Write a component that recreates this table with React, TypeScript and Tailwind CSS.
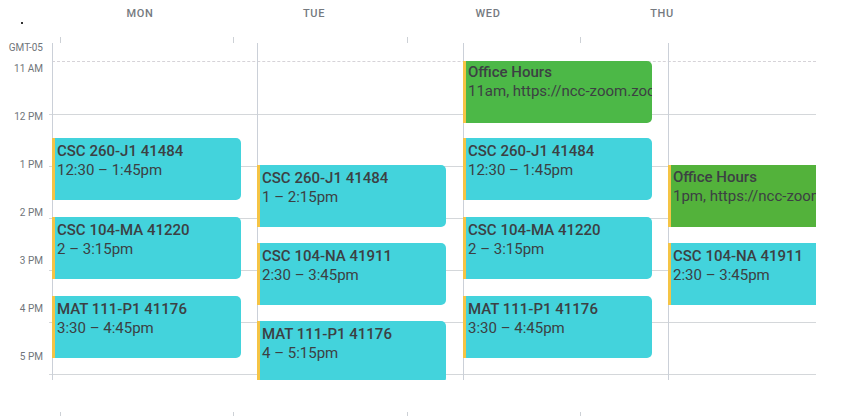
type CalEvent = {
  top: number;
  title: string;
  time: string;
  kind: "class" | "office" | "office2";
};

const days: { name: string; width: string; events: CalEvent[] }[] = [
  {
    name: "MON",
    width: "w-[205px]",
    events: [
      { top: 95, title: "CSC 260-J1 41484", time: "12:30 – 1:45pm", kind: "class" },
      { top: 174, title: "CSC 104-MA 41220", time: "2 – 3:15pm", kind: "class" },
      { top: 253, title: "MAT 111-P1 41176", time: "3:30 – 4:45pm", kind: "class" },
    ],
  },
  {
    name: "TUE",
    width: "w-[206px]",
    events: [
      { top: 122, title: "CSC 260-J1 41484", time: "1 – 2:15pm", kind: "class" },
      { top: 200, title: "CSC 104-NA 41911", time: "2:30 – 3:45pm", kind: "class" },
      { top: 278, title: "MAT 111-P1 41176", time: "4 – 5:15pm", kind: "class" },
    ],
  },
  {
    name: "WED",
    width: "w-[205px]",
    events: [
      { top: 18, title: "Office Hours", time: "11am, https://ncc-zoom.zoom.us", kind: "office" },
      { top: 95, title: "CSC 260-J1 41484", time: "12:30 – 1:45pm", kind: "class" },
      { top: 174, title: "CSC 104-MA 41220", time: "2 – 3:15pm", kind: "class" },
      { top: 253, title: "MAT 111-P1 41176", time: "3:30 – 4:45pm", kind: "class" },
    ],
  },
  {
    name: "THU",
    width: "w-[148px]",
    events: [
      { top: 122, title: "Office Hours", time: "1pm, https://ncc-zoom.zoom.us", kind: "office2" },
      { top: 200, title: "CSC 104-NA 41911", time: "2:30 – 3:45pm", kind: "class" },
    ],
  },
];

const hours = ["11 AM", "12 PM", "1 PM", "2 PM", "3 PM", "4 PM", "5 PM"];

function EventBlock({ ev }: { ev: CalEvent }) {
  const bg =
    ev.kind === "class" ? "bg-[#43d3dc]" : ev.kind === "office" ? "bg-[#4cb847]" : "bg-[#53b23b]";
  const pad = ev.kind === "class" ? "pt-[4px]" : ev.kind === "office" ? "pt-[2px]" : "pt-[3px]";
  return (
    <div
      className={`absolute left-[-1px] flex h-[62px] w-[189px] overflow-hidden rounded-r-[5px] ${bg}`}
      style={{ top: ev.top }}
    >
      <div className="w-[3px] shrink-0 bg-[#f5c445]" />
      <div className={`min-w-0 overflow-hidden whitespace-nowrap pl-[2px] text-[15px] leading-[19px] text-[#3c4043] ${pad}`}>
        <div className="font-medium">{ev.title}</div>
        <div>{ev.time}</div>
      </div>
    </div>
  );
}

function Ticks() {
  return (
    <div className="flex h-[6px]">
      <div className="ml-[60px] w-px bg-[#cdd1d6]" />
      <div className="ml-[172px] w-px bg-[#cdd1d6]" />
      <div className="ml-[173px] w-px bg-[#cdd1d6]" />
      <div className="ml-[172px] w-px bg-[#cdd1d6]" />
    </div>
  );
}

export default function App() {
  return (
    <div className="relative h-[416px] w-[851px] overflow-hidden bg-white font-[Roboto,sans-serif]">
      <div className="absolute left-[21px] top-[22px] h-[2px] w-[2px] bg-[#333]" />

      <div className="flex h-[37px] pl-[53px] pt-[6px]">
        {days.map((d) => (
          <div
            key={d.name}
            className="w-[174px] text-center text-[11px] font-medium leading-[16px] tracking-[0.6px] text-[#757a80]"
          >
            {d.name}
          </div>
        ))}
      </div>

      <Ticks />

      <div className="flex h-[337px]">
        <div className="w-[49px] text-right text-[10px] leading-[12px] text-[#70757a]">
          <div className="-mt-px h-[21px] pr-[6px]">GMT-05</div>
          {hours.map((h) => (
            <div key={h} className="h-[48px] pr-[6px]">
              {h}
            </div>
          ))}
        </div>

        <div className="relative w-[767px] overflow-hidden">
          <div className="flex h-full flex-col">
            <div className="h-[18px]" />
            <div className="ml-[3px] h-[53px] border-t border-dashed border-[#d6d3d8]" />
            <div className="h-[52px] border-t border-[#d4d7da]" />
            <div className="h-[52px] border-t border-[#d4d7da]" />
            <div className="h-[52px] border-t border-[#d4d7da]" />
            <div className="h-[52px] border-t border-[#d4d7da]" />
            <div className="h-[52px] border-t border-[#d4d7da]" />
            <div className="flex-1 border-t border-[#d4d7da]" />
          </div>

          <div className="absolute inset-0 flex pl-[3px]">
            {days.map((d) => (
              <div key={d.name} className={`relative h-full border-l border-[#cbd0d8] ${d.width}`}>
                {d.events.map((ev, i) => (
                  <EventBlock key={i} ev={ev} />
                ))}
              </div>
            ))}
          </div>
        </div>
      </div>

      <div className="h-[32px]" />
      <Ticks />
    </div>
  );
}
